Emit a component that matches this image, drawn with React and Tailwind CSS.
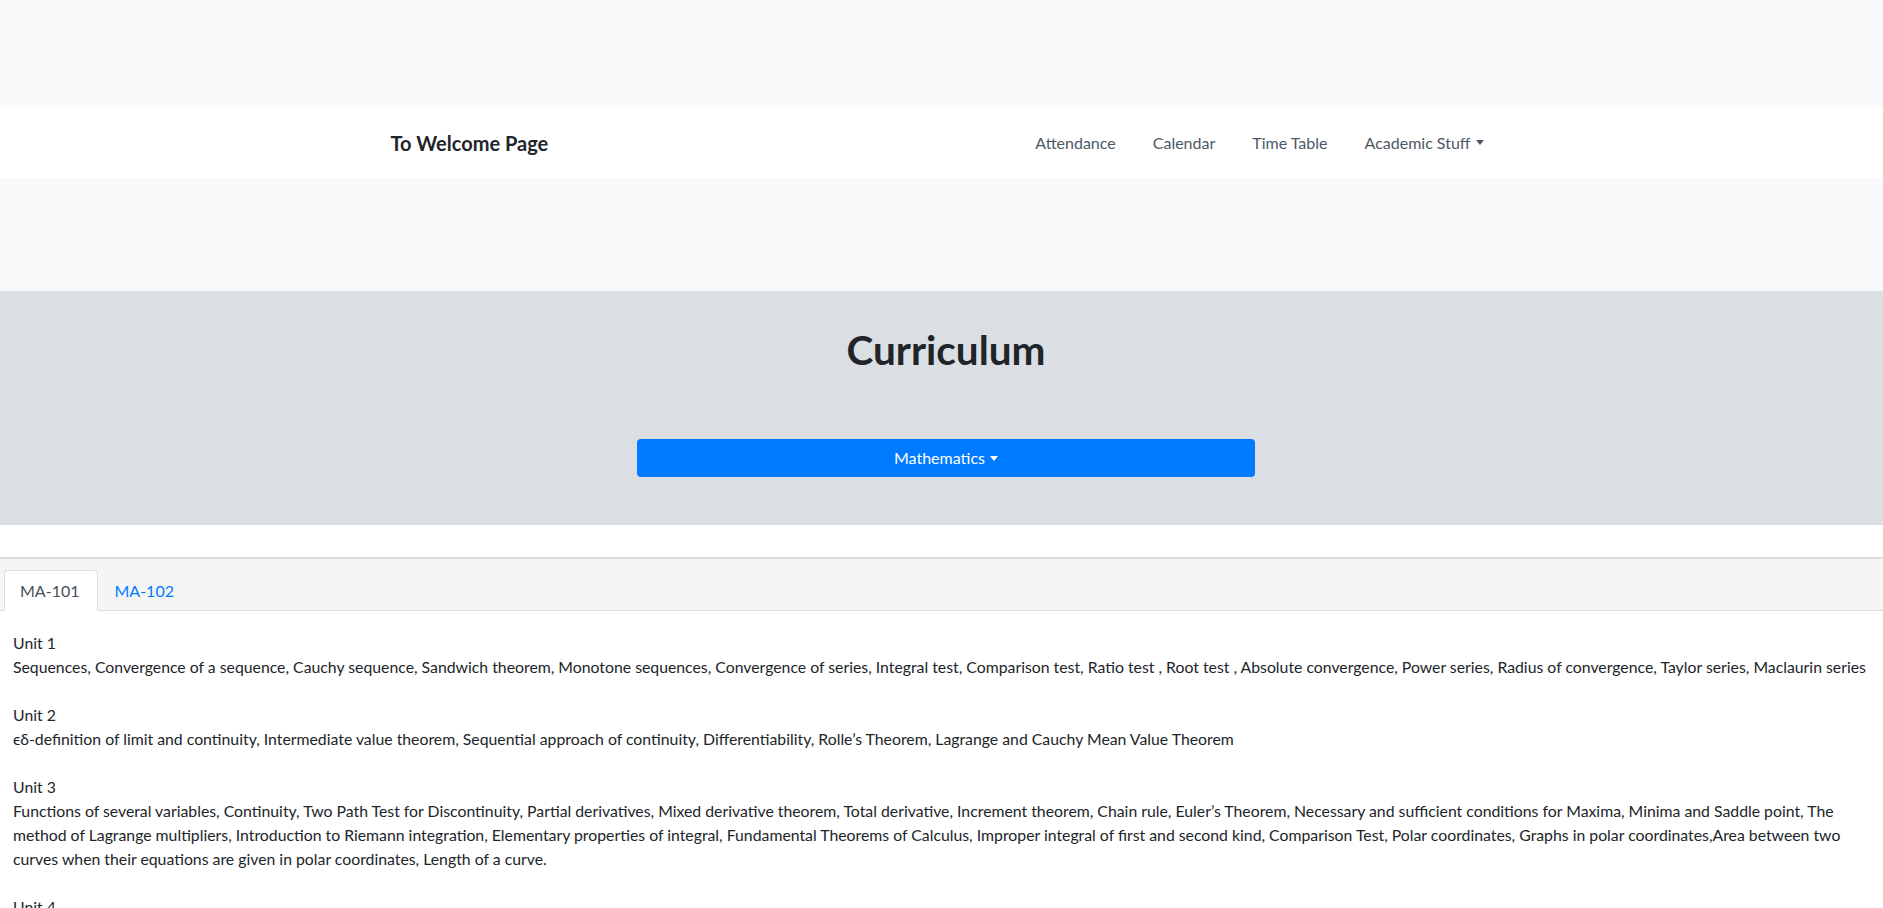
import React, { useState } from "react";

// Small dropdown caret like bootstrap's .dropdown-toggle::after
const Caret = () => (
  <span className="inline-block align-[0.2em] ml-[5px] w-0 h-0 border-t-[5px] border-t-current border-x-[4.5px] border-x-transparent" />
);

const NavBar = () => (
  <nav className="bg-white h-[71px]">
    <div className="w-[1140px] mx-auto h-full flex items-center pl-[19px] pr-[28px]">
      <a className="text-[20px] font-bold text-[#212529] cursor-pointer">To Welcome Page</a>
      <ul className="ml-auto flex items-center text-[16px] text-[#4d5866]">
        <li className="px-[18.5px] cursor-pointer">Attendance</li>
        <li className="px-[18.5px] cursor-pointer">Calendar</li>
        <li className="px-[18.5px] cursor-pointer">Time Table</li>
        <li className="pl-[18.5px] cursor-pointer">
          Academic Stuff
          <Caret />
        </li>
      </ul>
    </div>
  </nav>
);

const units = {
  "MA-101": [
    {
      title: "Unit 1",
      text: "Sequences, Convergence of a sequence, Cauchy sequence, Sandwich theorem, Monotone sequences, Convergence of series, Integral test, Comparison test, Ratio test , Root test , Absolute convergence, Power series, Radius of convergence, Taylor series, Maclaurin series",
    },
    {
      title: "Unit 2",
      text: "ϵδ-definition of limit and continuity, Intermediate value theorem, Sequential approach of continuity, Differentiability, Rolle’s Theorem, Lagrange and Cauchy Mean Value Theorem",
    },
    {
      title: "Unit 3",
      text: "Functions of several variables, Continuity, Two Path Test for Discontinuity, Partial derivatives, Mixed derivative theorem, Total derivative, Increment theorem, Chain rule, Euler’s Theorem, Necessary and sufficient conditions for Maxima, Minima and Saddle point, The method of Lagrange multipliers, Introduction to Riemann integration, Elementary properties of integral, Fundamental Theorems of Calculus, Improper integral of first and second kind, Comparison Test, Polar coordinates, Graphs in polar coordinates,Area between two curves when their equations are given in polar coordinates, Length of a curve.",
    },
    {
      title: "Unit 4",
      text: "Double integrals, Change of order of integration, Triple integrals, Change of variables, Applications to area and volume",
    },
  ],
  "MA-102": [
    {
      title: "Unit 1",
      text: "Matrices, Rank of a matrix, System of linear equations, Gauss elimination, Eigenvalues and eigenvectors",
    },
  ],
};

export default function App() {
  const [tab, setTab] = useState("MA-101");

  return (
    <div className="min-h-screen bg-white font-['Lato','Open_Sans',sans-serif] text-[#212529]">
      {/* top spacing */}
      <div className="bg-[#f8f9fa] h-[107px]" />
      <NavBar />
      <div className="bg-[#f8f9fa] h-[113px]" />

      {/* Jumbotron */}
      <section className="bg-[#dbdfe3] pt-[35px] pb-[48px] pl-[9px]">
        <h1 className="text-center text-[40.5px] leading-[48px] font-bold text-[#212529]">Curriculum</h1>
        <div className="flex justify-center mt-[65px]">
          <button className="w-[618px] h-[38px] rounded-[4px] bg-[#007bff] text-white text-[16px] flex items-center justify-center">
            Mathematics
            <Caret />
          </button>
        </div>
      </section>

      <div className="h-[32px]" />

      {/* Tabs */}
      <div className="border-t-2 border-[#dddddd] bg-[#f5f5f5] border-b border-b-[#dddddd] h-[54px] flex items-end pl-[4px]">
        {["MA-101", "MA-102"].map((t) => (
          <button
            key={t}
            onClick={() => setTab(t)}
            className={
              tab === t
                ? "h-[41px] -mb-px pl-[15px] pr-[18px] bg-white border border-[#dddddd] border-b-white rounded-t-[4px] text-[16px] text-[#495057]"
                : "h-[41px] -mb-px pl-[15px] pr-[18px] border border-transparent text-[16px] text-[#007bff]"
            }
          >
            {t}
          </button>
        ))}
      </div>

      {/* Units */}
      <div className="px-[13px] pt-[20px] pb-[24px] text-[15.8px] leading-[24px] text-[#212529]">
        {units[tab].map((u) => (
          <div key={u.title} className="mb-[24px]">
            <div>{u.title}</div>
            <div>{u.text}</div>
          </div>
        ))}
      </div>
    </div>
  );
}
